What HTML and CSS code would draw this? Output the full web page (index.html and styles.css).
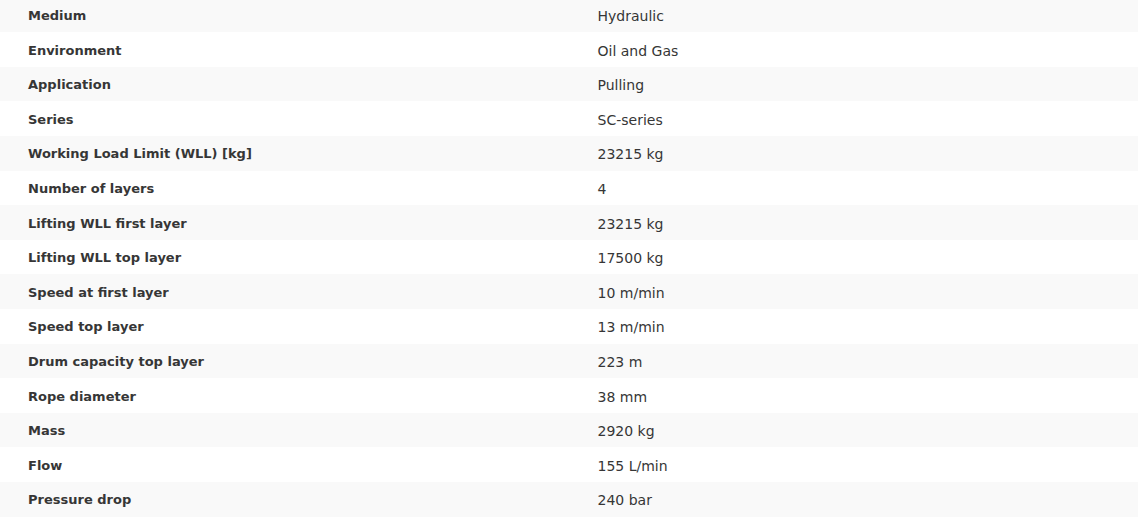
FILE: index.html
```html
<!DOCTYPE html>
<html lang="en">
<head>
<meta charset="utf-8">
<title>Specifications</title>
<link rel="stylesheet" href="styles.css">
</head>
<body>
<table class="specs">
  <tbody>
    <tr><th>Medium</th><td>Hydraulic</td></tr>
    <tr><th>Environment</th><td>Oil and Gas</td></tr>
    <tr><th>Application</th><td>Pulling</td></tr>
    <tr><th>Series</th><td>SC-series</td></tr>
    <tr><th>Working Load Limit (WLL) [kg]</th><td>23215 kg</td></tr>
    <tr><th>Number of layers</th><td>4</td></tr>
    <tr><th>Lifting WLL first layer</th><td>23215 kg</td></tr>
    <tr><th>Lifting WLL top layer</th><td>17500 kg</td></tr>
    <tr><th>Speed at first layer</th><td>10 m/min</td></tr>
    <tr><th>Speed top layer</th><td>13 m/min</td></tr>
    <tr><th>Drum capacity top layer</th><td>223 m</td></tr>
    <tr><th>Rope diameter</th><td>38 mm</td></tr>
    <tr><th>Mass</th><td>2920 kg</td></tr>
    <tr><th>Flow</th><td>155 L/min</td></tr>
    <tr><th>Pressure drop</th><td>240 bar</td></tr>
  </tbody>
</table>
</body>
</html>
```
FILE: styles.css
```css
html, body {
  margin: 0;
  padding: 0;
  background: #ffffff;
}
body {
  font-family: "DejaVu Sans", "Noto Sans", sans-serif;
  color: #363636;
}
.specs {
  width: 1138px;
  margin-top: -2.3px;
  border-collapse: collapse;
  table-layout: fixed;
}
.specs tr {
  height: 34.6px;
}
.specs tr:nth-child(odd) {
  background: #f9f9f9;
}
.specs th,
.specs td {
  width: 50%;
  padding: 2px 0 0 28px;
  text-align: left;
  vertical-align: middle;
  line-height: 20px;
}
.specs th {
  font-size: 13px;
  font-weight: 700;
}
.specs td {
  font-size: 14px;
  font-weight: 400;
  padding-left: 29px;
}
```
